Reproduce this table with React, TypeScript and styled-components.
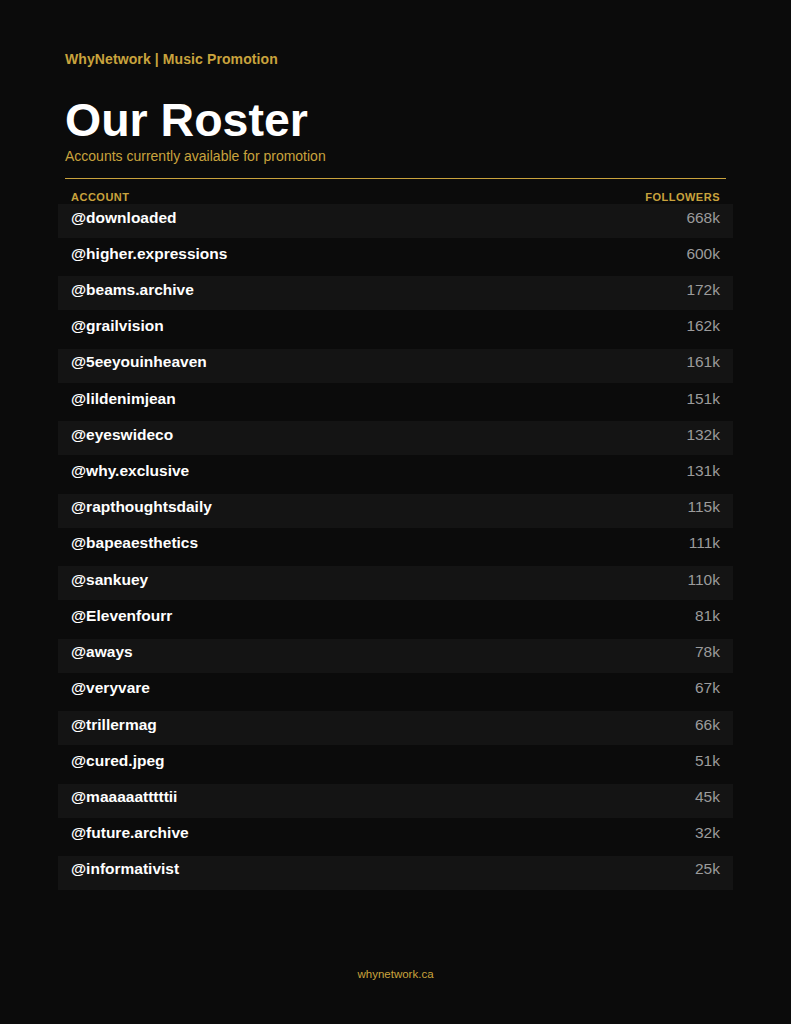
import React from 'react';
import styled, { createGlobalStyle } from 'styled-components';

const GlobalStyle = createGlobalStyle`
  html, body {
    margin: 0;
    padding: 0;
    background: #0b0b0b;
  }
  body {
    font-family: "Liberation Sans", Arial, Helvetica, sans-serif;
  }
`;

const gold = '#c9a33d';

const Page = styled.div`
  min-height: 100vh;
  box-sizing: border-box;
  display: flex;
  flex-direction: column;
  padding: 51px 65px 43px;
  background: #0b0b0b;
`;

const Brand = styled.div`
  color: ${gold};
  font-size: 14px;
  line-height: 16px;
  font-weight: 700;
  letter-spacing: 0.1px;
`;

const Title = styled.h1`
  margin: 30px 0 0;
  color: #ffffff;
  font-size: 46.5px;
  line-height: 46px;
  font-weight: 700;
`;

const Subtitle = styled.div`
  margin-top: 5px;
  color: ${gold};
  font-size: 14px;
  line-height: 16px;
`;

const Divider = styled.div`
  margin-top: 14px;
  border-top: 1px solid ${gold};
`;

const HeaderRow = styled.div`
  display: flex;
  justify-content: space-between;
  margin: 12px -7px 0;
  padding: 0 13px;
  color: ${gold};
  font-size: 11px;
  line-height: 13px;
  font-weight: 700;
  letter-spacing: 0.5px;
  text-transform: uppercase;
`;

const List = styled.div`
  display: flex;
  flex-direction: column;
  gap: 2.22px;
  margin: 0 -7px;
`;

const Row = styled.div<{ $striped: boolean }>`
  display: flex;
  justify-content: space-between;
  align-items: flex-start;
  height: 34px;
  box-sizing: border-box;
  padding: 4.5px 13px 0;
  background: ${({ $striped }) => ($striped ? '#141414' : 'transparent')};
  font-size: 15.5px;
  line-height: 18px;
`;

const Handle = styled.span`
  color: #ffffff;
  font-weight: 700;
`;

const Count = styled.span`
  color: #9b9b9b;
`;

const Footer = styled.div`
  margin-top: auto;
  text-align: center;
  color: ${gold};
  font-size: 11.5px;
  line-height: 14px;
`;

const roster: [string, string][] = [
  ['@downloaded', '668k'],
  ['@higher.expressions', '600k'],
  ['@beams.archive', '172k'],
  ['@grailvision', '162k'],
  ['@5eeyouinheaven', '161k'],
  ['@lildenimjean', '151k'],
  ['@eyeswideco', '132k'],
  ['@why.exclusive', '131k'],
  ['@rapthoughtsdaily', '115k'],
  ['@bapeaesthetics', '111k'],
  ['@sankuey', '110k'],
  ['@Elevenfourr', '81k'],
  ['@aways', '78k'],
  ['@veryvare', '67k'],
  ['@trillermag', '66k'],
  ['@cured.jpeg', '51k'],
  ['@maaaaatttttii', '45k'],
  ['@future.archive', '32k'],
  ['@informativist', '25k'],
];

const App = () => (
  <>
    <GlobalStyle />
    <Page>
      <Brand>WhyNetwork | Music Promotion</Brand>
      <Title>Our Roster</Title>
      <Subtitle>Accounts currently available for promotion</Subtitle>
      <Divider />
      <HeaderRow>
        <span>Account</span>
        <span>Followers</span>
      </HeaderRow>
      <List>
        {roster.map(([handle, count], i) => (
          <Row key={handle} $striped={i % 2 === 0}>
            <Handle>{handle}</Handle>
            <Count>{count}</Count>
          </Row>
        ))}
      </List>
      <Footer>whynetwork.ca</Footer>
    </Page>
  </>
);

export default App;
